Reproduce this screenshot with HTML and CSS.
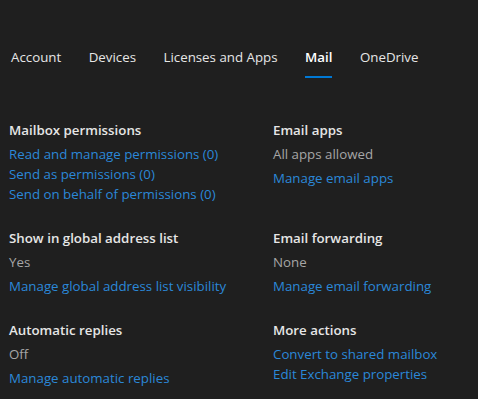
FILE: index.html
```html
<!DOCTYPE html>
<html lang="en">
<head>
<meta charset="utf-8">
<title>Mail</title>
<link rel="stylesheet" href="styles.css">
</head>
<body>
<nav class="tabs">
  <a class="tab">Account</a>
  <a class="tab">Devices</a>
  <a class="tab">Licenses and Apps</a>
  <a class="tab active">Mail</a>
  <a class="tab">OneDrive</a>
</nav>
<main class="grid">
  <section class="sec">
    <h3 class="head">Mailbox permissions</h3>
    <a class="link">Read and manage permissions (0)</a>
    <a class="link">Send as permissions (0)</a>
    <a class="link">Send on behalf of permissions (0)</a>
  </section>
  <section class="sec">
    <h3 class="head">Email apps</h3>
    <p class="val">All apps allowed</p>
    <a class="link">Manage email apps</a>
  </section>
  <section class="sec">
    <h3 class="head">Show in global address list</h3>
    <p class="val">Yes</p>
    <a class="link">Manage global address list visibility</a>
  </section>
  <section class="sec">
    <h3 class="head">Email forwarding</h3>
    <p class="val">None</p>
    <a class="link">Manage email forwarding</a>
  </section>
  <section class="sec">
    <h3 class="head">Automatic replies</h3>
    <p class="val">Off</p>
    <a class="link">Manage automatic replies</a>
  </section>
  <section class="sec">
    <h3 class="head">More actions</h3>
    <a class="link">Convert to shared mailbox</a>
    <a class="link">Edit Exchange properties</a>
  </section>
</main>
</body>
</html>
```
FILE: styles.css
```css
html, body {
  margin: 0;
  padding: 0;
  background: #1f1f1f;
  height: 100%;
}
body {
  font-family: "Open Sans", "Noto Sans", Arial, sans-serif;
  font-size: 13.3px;
  color: #e6e6e6;
  overflow: hidden;
}
.tabs {
  display: flex;
  gap: 27.5px;
  padding: 47px 0 0 11px;
}
.tab {
  display: block;
  line-height: 20px;
  padding-bottom: 9px;
  border-bottom: 2px solid transparent;
  color: #e6e6e6;
}
.tab.active {
  font-weight: 600;
  color: #ffffff;
  border-bottom-color: #0078d4;
}
.grid {
  display: grid;
  grid-template-columns: 264px 1fr;
  row-gap: 24px;
  padding: 42px 0 0 9px;
}
.sec {
  display: flex;
  flex-direction: column;
  align-items: flex-start;
}
.head {
  margin: 0 0 4px;
  font-size: 13.3px;
  font-weight: 600;
  line-height: 20px;
  color: #e6e6e6;
}
.val {
  margin: 0 0 4px;
  line-height: 20px;
  color: #a6a6a6;
}
.link {
  line-height: 20px;
  color: #2b88d8;
  cursor: pointer;
}
```
